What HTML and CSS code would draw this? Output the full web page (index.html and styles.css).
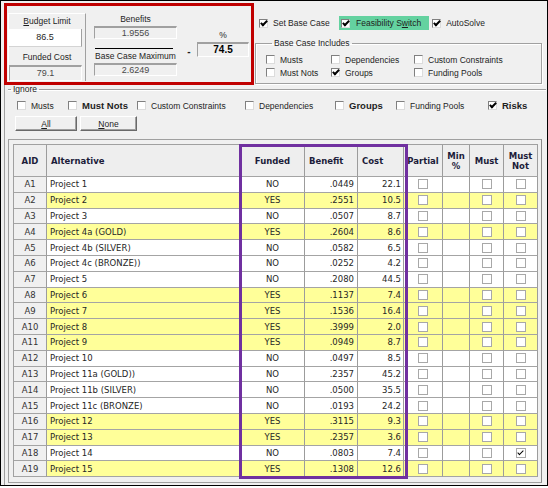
FILE: index.html
```html
<!DOCTYPE html>
<html lang="en">
<head>
  <meta charset="UTF-8" />
  <meta name="viewport" content="width=device-width, initial-scale=1.0" />
  <title>Portfolio Selection</title>
  <link rel="stylesheet" href="styles.css">
</head>
<body>
  <div class="frame">
    <div class="top">
      <div class="summary">
        <div class="limits">
          <div class="cap"><u>B</u>udget Limit</div>
          <div class="field">86.5</div>
          <div class="cap low">Funded Cost</div>
          <div class="readout">79.1</div>
        </div>
        <div class="ratio">
          <div class="cap">Benefits</div>
          <div class="readout">1.9556</div>
          <div class="bar"></div>
          <div class="cap low">Base Case Maximum</div>
          <div class="readout">2.6249</div>
        </div>
        <div class="minus">-</div>
        <div class="pct">
          <div class="cap">%</div>
          <div class="readout strong">74.5</div>
        </div>
      </div>
      <div class="opts">
        <div class="opt-row">
          <label class="chk set"><span class="cb on"></span><span>Set Base Case</span></label>
          <label class="chk feas"><span class="cb on"></span><span>Feasibility S<u>w</u>itch</span></label>
          <label class="chk auto"><span class="cb on"></span><span>AutoSolve</span></label>
        </div>
        <fieldset class="group">
          <legend>Base Case Includes</legend>
          <div class="includes">
            <label class="chk"><span class="cb"></span><span>Musts</span></label>
            <label class="chk"><span class="cb"></span><span>Dependencies</span></label>
            <label class="chk"><span class="cb"></span><span>Custom Constraints</span></label>
            <label class="chk"><span class="cb"></span><span>Must Nots</span></label>
            <label class="chk"><span class="cb on"></span><span>Groups</span></label>
            <label class="chk"><span class="cb"></span><span>Funding Pools</span></label>
          </div>
        </fieldset>
      </div>
    </div>

    <div class="lower">
      <fieldset class="ignore">
        <legend>Ignore</legend>
        <div class="ignore-row">
          <label class="chk"><span class="cb"></span><span>Musts</span></label>
          <label class="chk b"><span class="cb"></span><span>Must Nots</span></label>
          <label class="chk"><span class="cb"></span><span>Custom Constraints</span></label>
          <label class="chk"><span class="cb"></span><span>Dependencies</span></label>
          <label class="chk b"><span class="cb"></span><span>Groups</span></label>
          <label class="chk"><span class="cb"></span><span>Funding Pools</span></label>
          <label class="chk b"><span class="cb on"></span><span>Risks</span></label>
        </div>
        <div class="btn-row">
          <button class="btn all"><u>A</u>ll</button>
          <button class="btn none"><u>N</u>one</button>
        </div>
      </fieldset>

      <div class="grid-wrap">
        <div class="grid" id="grid">
          <div class="hd mid">AID</div>
          <div class="hd">Alternative</div>
          <div class="hd mid">Funded</div>
          <div class="hd">Benefit</div>
          <div class="hd">Cost</div>
          <div class="hd mid">Partial</div>
          <div class="hd mid two">Min<br>%</div>
          <div class="hd mid">Must</div>
          <div class="hd mid two">Must<br>Not</div>
        </div>
        <div class="focus"></div>
      </div>
    </div>
  </div>

  <script>
    const rows = [
      ['A1', 'Project 1', 'NO', '.0449', '22.1'],
      ['A2', 'Project 2', 'YES', '.2551', '10.5'],
      ['A3', 'Project 3', 'NO', '.0507', '8.7'],
      ['A4', 'Project 4a (GOLD)', 'YES', '.2604', '8.6'],
      ['A5', 'Project 4b (SILVER)', 'NO', '.0582', '6.5'],
      ['A6', 'Project 4c (BRONZE))', 'NO', '.0252', '4.2'],
      ['A7', 'Project 5', 'NO', '.2080', '44.5'],
      ['A8', 'Project 6', 'YES', '.1137', '7.4'],
      ['A9', 'Project 7', 'YES', '.1536', '16.4'],
      ['A10', 'Project 8', 'YES', '.3999', '2.0'],
      ['A11', 'Project 9', 'YES', '.0949', '8.7'],
      ['A12', 'Project 10', 'NO', '.0497', '8.5'],
      ['A13', 'Project 11a (GOLD))', 'NO', '.2357', '45.2'],
      ['A14', 'Project 11b (SILVER)', 'NO', '.0500', '35.5'],
      ['A15', 'Project 11c (BRONZE)', 'NO', '.0193', '24.2'],
      ['A16', 'Project 12', 'YES', '.3115', '9.3'],
      ['A17', 'Project 13', 'YES', '.2357', '3.6'],
      ['A18', 'Project 14', 'NO', '.0803', '7.4', true],
      ['A19', 'Project 15', 'YES', '.1308', '12.6']
    ];

    const grid = document.getElementById('grid');
    const box = on => '<span class="gcb' + (on ? ' on' : '') + '"></span>';

    rows.forEach(([aid, name, funded, benefit, cost, mustNot]) => {
      const bg = funded === 'YES' ? ' yes' : '';
      grid.insertAdjacentHTML('beforeend',
        '<div class="cell aid">' + aid + '</div>' +
        '<div class="cell name' + bg + '">' + name + '</div>' +
        '<div class="cell mid' + bg + '">' + funded + '</div>' +
        '<div class="cell num' + bg + '">' + benefit + '</div>' +
        '<div class="cell num cost' + bg + '">' + cost + '</div>' +
        '<div class="cell mid' + bg + '">' + box() + '</div>' +
        '<div class="cell' + bg + '"></div>' +
        '<div class="cell mid' + bg + '">' + box() + '</div>' +
        '<div class="cell mid' + bg + '">' + box(mustNot) + '</div>');
    });
  </script>
</body>
</html>
```

FILE: styles.css
```css
* {
  box-sizing: border-box;
}
body {
  margin: 0;
  background: #fff;
  font-family: "Liberation Sans", Arial, sans-serif;
  font-size: 8.5px;
  color: #1e1e1e;
}
.frame {
  width: 548px;
  height: 486px;
  border: 1px solid #000;
  background: #f0f0f0;
  overflow: hidden;
}

/* top: budget summary + options */
.top {
  display: flex;
  align-items: flex-start;
  height: 83px;
}
.summary {
  display: flex;
  align-items: flex-start;
  flex: none;
  width: 250px;
  height: 82px;
  margin: 2px 0 0 3px;
  padding: 7px 0 0 1px;
  border: 3px solid #c00000;
}
.cap {
  height: 13px;
  line-height: 13px;
  text-align: center;
  white-space: nowrap;
}
.limits {
  width: 78px;
  height: 68px;
  border-top: 1px solid #fff;
  border-left: 1px solid #fff;
  border-right: 1px solid #a0a0a0;
}
.limits .cap {
  height: 15px;
  line-height: 14px;
}
.limits .cap.low {
  height: 18px;
  line-height: 20px;
}
.field {
  width: 73px;
  height: 18px;
  line-height: 17px;
  background: #fff;
  border-right: 1px solid #a0a0a0;
  border-bottom: 1px solid #d4d4d4;
  text-align: center;
  font-size: 9px;
}
.readout {
  height: 13px;
  line-height: 11px;
  background: #f0f0f0;
  border-top: 2px solid #a0a0a0;
  border-left: 1px solid #a0a0a0;
  border-right: 1px solid #fff;
  border-bottom: 1px solid #fff;
  text-align: center;
  font-size: 9px;
  color: #4a4a4a;
}
.limits .readout {
  width: 73px;
  height: 16px;
  line-height: 13px;
}
.ratio {
  width: 83px;
  margin-left: 8px;
}
.ratio .cap.low {
  height: 14px;
  line-height: 15px;
}
.bar {
  height: 1px;
  margin: 9px 4px 0 1px;
  background: #000;
}
.minus {
  width: 8px;
  margin: 33px 0 0 8px;
  font-size: 10px;
  font-weight: bold;
  text-align: center;
}
.pct {
  width: 52px;
  margin-left: 4px;
  padding-top: 16px;
}
.readout.strong {
  height: 15px;
  line-height: 12px;
  font-weight: bold;
  font-size: 10px;
  color: #000;
}

.opts {
  flex: 1;
  padding: 15px 0 0 3px;
}
.opt-row {
  display: flex;
  align-items: center;
  height: 14px;
  margin-left: 2px;
}
.chk {
  display: flex;
  align-items: center;
  gap: 5px;
  white-space: nowrap;
}
.chk.b {
  font-weight: bold;
  font-size: 9.5px;
}
.set {
  width: 80px;
}
.feas {
  height: 14px;
  padding: 0 8px 0 2px;
  gap: 6px;
  background: #64d2a0;
}
.auto {
  margin-left: 3px;
}
.cb {
  position: relative;
  flex: none;
  width: 9px;
  height: 9px;
  background: #fff;
  border: 1px solid;
  border-color: #808080 #dcdcdc #dcdcdc #808080;
}
.cb.on::after {
  content: "";
  position: absolute;
  left: 2px;
  top: -1px;
  width: 2px;
  height: 5px;
  border: solid #000;
  border-width: 0 2px 2px 0;
  transform: rotate(45deg);
}

fieldset {
  margin: 0;
  padding: 0;
  min-width: 0;
}
legend {
  padding: 0 2px;
  line-height: 10px;
}
.group {
  width: 287px;
  margin: 8px 0 0 -2px;
  padding: 5px 0 4px 10px;
  border: 1px solid #a0a0a0;
  box-shadow: inset 1px 1px 0 #fff, 1px 1px 0 #fff;
}
.group legend {
  margin-left: 6px;
}
.includes {
  display: grid;
  grid-template-columns: 65px 83px auto;
  grid-auto-rows: 13px;
}

/* lower: ignore options + grid */
.lower {
  height: 401px;
  margin-left: 3px;
  border-left: 1px solid #a0a0a0;
}
.ignore {
  margin: 0 1px 0 3px;
  border: none;
  border-top: 1px solid #a0a0a0;
  box-shadow: inset 0 1px 0 #fff;
}
.ignore legend {
  margin-left: 3px;
}
.ignore-row {
  display: grid;
  grid-template-columns: 51px 69px 108px 90px 61px 92px auto;
  align-items: center;
  height: 11px;
  margin: 6px 0 0 9px;
}
.btn-row {
  display: flex;
  gap: 3px;
  margin: 5px 0 0 7px;
}
.btn {
  height: 15px;
  padding: 0;
  font: inherit;
  color: #1e1e1e;
  background: #f0f0f0;
  border: 1px solid;
  border-color: #fff #696969 #696969 #fff;
  box-shadow: inset -1px -1px 0 #a0a0a0;
}
.btn.all {
  width: 62px;
}
.btn.none {
  width: 57px;
}

.grid-wrap {
  position: relative;
  width: 534px;
  height: 344px;
  margin: 8px 0 0 3px;
  padding: 4px;
  border: 1px solid #a0a0a0;
  border-right-color: #8a8a8a;
}
.grid {
  display: grid;
  grid-template-columns: 33px 194px 64px 53px 46px 39px 27px 34px 34px;
  grid-template-rows: 32px;
  grid-auto-rows: 15.8px;
  width: 525px;
  border-top: 1px solid #a0a0a0;
  border-left: 1px solid #a0a0a0;
  font-family: "DejaVu Sans", Verdana, sans-serif;
  font-size: 8.5px;
}
.hd,
.cell {
  display: flex;
  align-items: center;
  border-right: 1px solid #9c9c9c;
  border-bottom: 1px solid #a4a4a4;
  white-space: nowrap;
  overflow: hidden;
}
.hd {
  padding-left: 4px;
  background: #eeeeee;
  font-weight: bold;
  color: #1c1c3a;
}
.hd.two {
  line-height: 10px;
  text-align: center;
}
.mid {
  justify-content: center;
}
.hd.mid {
  padding-left: 0;
}
.cell {
  background: #fff;
  color: #262626;
}
.cell.yes {
  background: #ffff99;
}
.cell.aid {
  justify-content: center;
  background: #f0f0f0;
  color: #333;
}
.cell.name {
  padding-left: 3px;
}
.cell.num {
  justify-content: flex-end;
  padding-right: 3px;
}
.cell.cost {
  padding-right: 2px;
}
.gcb {
  position: relative;
  width: 10px;
  height: 10px;
  border: 1px solid #a8a8a8;
  background: #fff;
}
.gcb.on::after {
  content: "";
  position: absolute;
  left: 2.5px;
  top: 0;
  width: 2px;
  height: 5px;
  border: solid #000;
  border-width: 0 1.5px 1.5px 0;
  transform: rotate(45deg);
}
.focus {
  position: absolute;
  left: 230px;
  top: 4px;
  width: 169px;
  height: 335px;
  border: 3px solid #7030a0;
  pointer-events: none;
}
```
